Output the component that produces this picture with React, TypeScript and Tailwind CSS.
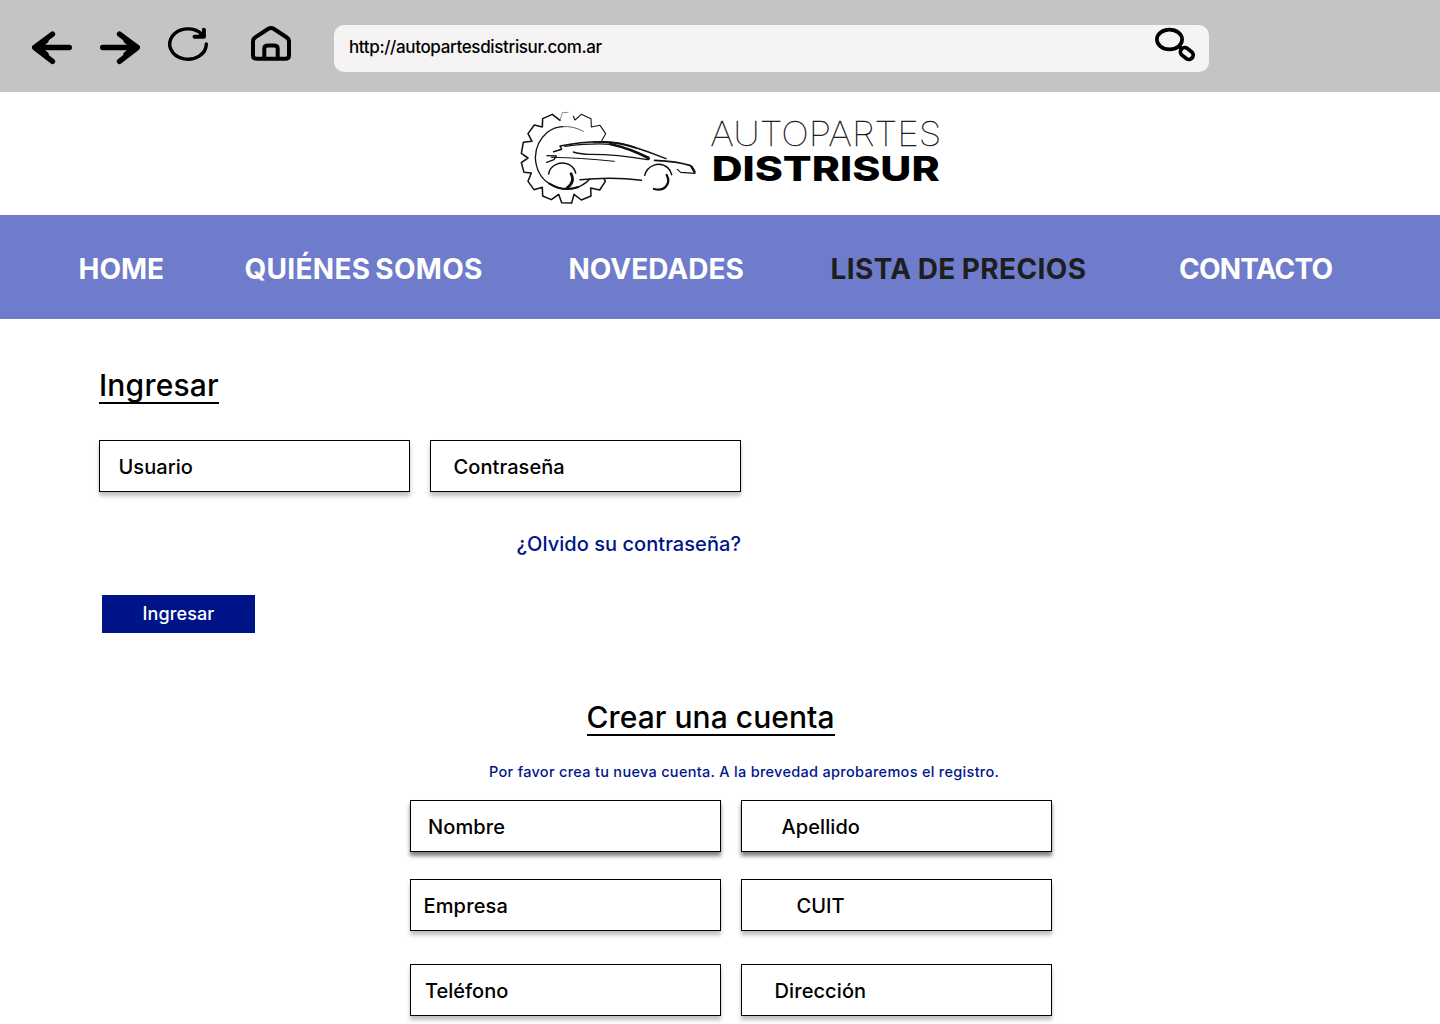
function BrowserBar() {
  return (
    <header className="flex h-[92px] items-start bg-[#c4c4c4]">
      <svg className="ml-8 mt-[31px] h-[34px] w-10" viewBox="0 0 40 34" fill="none" stroke="#000" strokeWidth="5.4" strokeLinecap="round" strokeLinejoin="round">
        <path d="M37.300 16.500H3M20.500 3.200L2.700 16.500L20.500 30.300M14 9.500L5 16.500L14 23.500" />
      </svg>
      <svg className="ml-7 mt-[31px] h-[34px] w-10" viewBox="0 0 40 34" fill="none" stroke="#000" strokeWidth="5.4" strokeLinecap="round" strokeLinejoin="round">
        <path d="M2.700 16.500H37M19.500 3.200L37.300 16.500L19.500 30.300M26 9.500L35 16.500L26 23.500" />
      </svg>
      <svg className="ml-7 mt-[27px] h-[35px] w-10" viewBox="0 0 40 35" fill="none" stroke="#000" strokeWidth="3.4" strokeLinecap="round" strokeLinejoin="round">
        <path d="M38.300 17A18.300 15.200 0 1 1 33.500 6.800L36 9" />
        <path d="M35.900 2.600V9.700H26.500M33 7L35.900 9.700" strokeWidth="3.900" />
      </svg>
      <svg className="ml-[43px] mt-[26px] h-[36px] w-10" viewBox="0 0 40 36" fill="none" stroke="#000" strokeWidth="4" strokeLinejoin="round">
        <path d="M2 15.500V29.700Q2 32.700 6 32.700H34Q38 32.700 38 29.700V15.500Q38 12.800 35.500 11.200L23 3Q20 1.200 17 3L4.500 11.200Q2 12.800 2 15.500Z" />
        <path d="M13.300 32.500V22.500Q13.300 19.600 17.300 19.600H22.700Q26.700 19.600 26.700 22.500V32.500" />
      </svg>
      <div className="ml-[43px] mt-[25px] flex h-[47px] w-[875px] items-start justify-between rounded-[10px] bg-[#f5f3f4] pl-[15px] pr-3.5">
        <span className="mt-2.5 text-[17px] font-medium leading-6 tracking-[-0.36px]">http://autopartesdistrisur.com.ar</span>
        <svg className="mt-0.5 h-[35px] w-10" viewBox="0 0 40 35" fill="none" stroke="#000" strokeWidth="3.700">
          <ellipse cx="14.500" cy="12.500" rx="12.600" ry="9.900" />
          <path d="M23.500 18.500l3 3.500" />
          <rect x="24.900" y="22.200" width="13.800" height="8.600" rx="4.300" transform="rotate(38 31.800 26.500)" />
        </svg>
      </div>
    </header>
  );
}

function Logo() {
  return (
    <div className="flex h-[123px] items-start bg-white pl-[510px] pt-2">
      <svg className="h-[115px] w-[450px]" viewBox="0 0 1350 345" fill="none" stroke="#111" strokeLinecap="round" strokeLinejoin="round">
        <g strokeWidth="3">
          <path d="M150 61L127 43L98 56L97 81L73 75L54 101L66 124L40 127L34 160L54 174L34 188L42 217L64 219L54 244L72 269L97 262L98 288L124 299L146 283L155 308L185 309L192 283L214 300L243 288L242 264L269 270L286 244L283 238" strokeWidth="4.600" />
          <path d="M190 49L195 60L214 43L243 56L244 81L270 76L287 101L275 122" strokeWidth="3.200" />
          <path d="M150 61L157 38L174 37" strokeWidth="2" stroke="#555" />
        </g>
        <path d="M220 94Q190 77 158 80" strokeWidth="2" />
        <path d="M158 80Q133 81 112 97Q77 127 76 173Q79 226 118 251Q160 277 205 261Q229 250 239 237" strokeWidth="4" />
        <path d="M118 251Q160 277 205 261" strokeWidth="6" />
        <path d="M183 221Q197 246 169 266" strokeWidth="8" />
        <path d="M116 222C120 194 153 182 178 194Q193 203 197 219" strokeWidth="4.500" />
        <path d="M111 167L139 168L132 179L110 187" strokeWidth="4" />
        <path d="M124 172Q210 173 313 184" strokeWidth="3" />
        <path d="M131 155L155 148L150 138Q216 124 286 125Q326 126 360 137Q414 154 468 176" strokeWidth="4.500" />
        <path d="M502 208L512 217L555 220V214L546 199" strokeWidth="3.500" />
        <path d="M165 139Q245 129 302 133Q358 145 416 171Q421 178 412 179Q315 162 235 163Q208 162 190 156" strokeWidth="4" />
        <path d="M300 132Q361 145 415 175" strokeWidth="7" />
        <path d="M250 126Q318 123 378 144" strokeWidth="5" />
        <path d="M434 181Q503 184 542 197L553 216" strokeWidth="5.500" />
        <path d="M210 239Q310 229 394 241" strokeWidth="4.500" />
        <path d="M404 226C412 196 448 182 473 203Q482 211 485 224" strokeWidth="4.500" />
        <path d="M470 225C484 250 464 276 432 267" strokeWidth="7" />
        <g stroke="none" fill="#000" strokeLinejoin="miter">
          <text x="601" y="138" fontFamily="Inter, sans-serif" fontWeight="100" fontSize="103" textLength="693" lengthAdjust="spacingAndGlyphs" stroke="#111" strokeWidth="0.8">AUTOPARTES</text>
          <text x="605" y="242" fontFamily="Inter, sans-serif" fontWeight="800" fontSize="103" textLength="684" lengthAdjust="spacingAndGlyphs">DISTRISUR</text>
        </g>
      </svg>
    </div>
  );
}

function Nav() {
  return (
    <nav className="flex h-[104px] items-center whitespace-nowrap bg-[#6f7ccb] pt-[3px] text-[28px] font-bold leading-8 text-white">
      <a className="ml-[78.5px] w-[166px]">HOME</a>
      <a className="w-[324px] tracking-[0.3px] [word-spacing:-2px]">QUIÉNES SOMOS</a>
      <a className="w-[262px]">NOVEDADES</a>
      <a className="w-[348.500px] tracking-[0.4px] [word-spacing:-1px]">
        <span className="text-[#1e1e1e]">LISTA DE PRECIOS</span>
      </a>
      <a className="tracking-[-0.8px]">CONTACTO</a>
    </nav>
  );
}

function Field({ label, className }: { label: string; className: string }) {
  return (
    <div className={"flex h-[52px] w-[311px] items-center border border-black bg-white pt-0.5 text-xl font-medium leading-6 " + className}>
      {label}
    </div>
  );
}

const soft = "shadow-[0_4px_4px_rgba(0,0,0,0.25)] ";
const strong = "shadow-[0_4px_4px_rgba(0,0,0,0.5)] ";

export default function App() {
  return (
    <div className="h-[1024px] w-[1440px] overflow-hidden bg-white font-['Inter',sans-serif] text-black">
      <BrowserBar />
      <Logo />
      <Nav />
      <main>
        <section className="ml-[99px] w-[642px] pt-12">
          <h1 className="h-[37px] w-fit border-b-2 border-black text-[30px] font-medium leading-[37px] tracking-[0.2px]">Ingresar</h1>
          <div className="mt-9 flex gap-5">
            <Field label="Usuario" className={soft + "pl-[18.5px] tracking-[0.05px]"} />
            <Field label="Contraseña" className={soft + "pl-[22.5px] tracking-[0.08px]"} />
          </div>
          <a className="mt-10 block text-right text-xl font-medium leading-6 tracking-[0.05px] text-[#00148a]">¿Olvido su contraseña?</a>
          <button className="ml-[3px] mt-[39px] flex h-[38px] w-[153px] items-center justify-center bg-[#00148a] text-lg font-medium leading-6 tracking-[0.1px] text-white">Ingresar</button>
        </section>
        <section className="ml-[410px] mt-[65px] w-[642px]">
          <h2 className="ml-[176.5px] h-[38px] w-fit border-b-2 border-black text-[30px] font-medium leading-[38px] tracking-[0.06px]">Crear una cuenta</h2>
          <p className="ml-[79px] mt-[26px] whitespace-nowrap text-[14.5px] font-medium leading-5 tracking-[0.3px] text-[#00148a]">
            Por favor crea tu nueva cuenta. A la brevedad aprobaremos el registro.
          </p>
          <div className="mt-[18px] flex gap-5">
            <Field label="Nombre" className={strong + "pl-[17px] tracking-[0.1px]"} />
            <Field label="Apellido" className={strong + "pl-[39.5px] tracking-[0.08px]"} />
          </div>
          <div className="mt-[27px] flex gap-5">
            <Field label="Empresa" className={soft + "pl-[12.5px] tracking-[0.15px]"} />
            <Field label="CUIT" className={soft + "pl-[54.5px] tracking-[0px]"} />
          </div>
          <div className="mt-[33px] flex gap-5">
            <Field label="Teléfono" className={soft + "pl-3.5 tracking-[0px]"} />
            <Field label="Dirección" className={soft + "pl-[32.500px] tracking-[0.1px]"} />
          </div>
        </section>
      </main>
    </div>
  );
}
